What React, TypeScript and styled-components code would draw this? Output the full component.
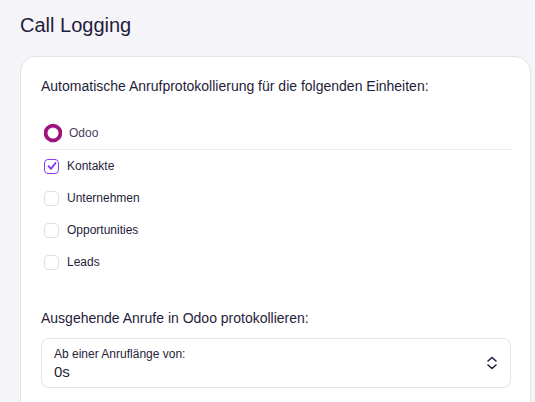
import React from 'react';
import styled, { createGlobalStyle } from 'styled-components';

const GlobalStyle = createGlobalStyle`
  body {
    margin: 0;
    background: #f5f5f9;
    font-family: "Liberation Sans", Arial, sans-serif;
    color: #1f1d3a;
  }
`;

const Page = styled.div`
  padding: 12px 4px 0 20px;
  height: 402px;
  overflow: hidden;
  box-sizing: border-box;
`;

const Title = styled.h1`
  margin: 0;
  font-size: 20px;
  font-weight: 400;
  line-height: 26px;
`;

const Card = styled.div`
  margin-top: 18px;
  background: #ffffff;
  border: 1px solid #e3e3e8;
  border-radius: 16px;
  padding: 19px 19px 20px 20px;
  height: 400px;
`;

const SectionLabel = styled.p<{ $gap: number }>`
  margin: 0 0 ${p => p.$gap}px;
  font-size: 14px;
  line-height: 20px;
`;

const List = styled.div`
  display: flex;
  flex-direction: column;
`;

const Row = styled.label<{ $divider?: boolean }>`
  display: flex;
  align-items: center;
  gap: ${p => (p.$divider ? 7 : 8)}px;
  height: ${p => (p.$divider ? 33 : 32)}px;
  font-size: 12px;
  border-bottom: ${p => (p.$divider ? '1px solid #ebebef' : 'none')};
  padding-left: 3px;
`;

const OdooText = styled.span`
  color: #4a3d63;
  margin-top: 1px;
`;

const Box = styled.span<{ $checked?: boolean }>`
  width: 13px;
  height: 13px;
  border: 1.5px solid ${p => (p.$checked ? '#8b3dff' : '#e2e2e6')};
  border-radius: 4px;
  display: flex;
  align-items: center;
  justify-content: center;
  background: #fff;
`;

const Spacer = styled.div`
  height: 30px;
`;

const Select = styled.div`
  border: 1px solid #e3e3e8;
  border-radius: 8px;
  height: 48px;
  padding: 0 12px;
  display: flex;
  align-items: center;
  justify-content: space-between;
  margin-top: 10px;
`;

const SelectValues = styled.div`
  display: flex;
  flex-direction: column;
  padding-top: 1px;
`;

const SmallLabel = styled.span`
  font-size: 12px;
  line-height: 16px;
`;

const Value = styled.span`
  font-size: 15px;
  line-height: 20px;
`;

const OdooRing = () => (
  <svg width="18" height="20" viewBox="0 0 18 20">
    <circle cx="9" cy="11" r="7.3" fill="none" stroke="#ececf0" strokeWidth="3.6" />
    <circle cx="9" cy="10" r="7.4" fill="none" stroke="#a0127e" strokeWidth="3.7" />
  </svg>
);

const Check = () => (
  <svg width="10" height="10" viewBox="0 0 10 10">
    <path d="M1.5 5.2 L4 7.8 L8.6 2" fill="none" stroke="#7b2ff0" strokeWidth="1.8" strokeLinecap="round" strokeLinejoin="round" />
  </svg>
);

const Chevrons = () => (
  <svg width="12" height="14" viewBox="0 0 12 14">
    <path d="M2 5 L6 1.5 L10 5 M2 9 L6 12.5 L10 9" fill="none" stroke="#1f1d3a" strokeWidth="1.6" strokeLinecap="round" strokeLinejoin="round" />
  </svg>
);

const entities = [
  { name: 'Kontakte', checked: true },
  { name: 'Unternehmen', checked: false },
  { name: 'Opportunities', checked: false },
  { name: 'Leads', checked: false },
];

export default function App() {
  return (
    <>
      <GlobalStyle />
      <Page>
        <Title>Call Logging</Title>
        <Card>
          <SectionLabel $gap={20}>Automatische Anrufprotokollierung für die folgenden Einheiten:</SectionLabel>
          <List>
            <Row $divider>
              <OdooRing />
              <OdooText>Odoo</OdooText>
            </Row>
            {entities.map(e => (
              <Row key={e.name}>
                <Box $checked={e.checked}>{e.checked && <Check />}</Box>
                {e.name}
              </Row>
            ))}
          </List>
          <Spacer />
          <SectionLabel $gap={0}>Ausgehende Anrufe in Odoo protokollieren:</SectionLabel>
          <Select>
            <SelectValues>
              <SmallLabel>Ab einer Anruflänge von:</SmallLabel>
              <Value>0s</Value>
            </SelectValues>
            <Chevrons />
          </Select>
        </Card>
      </Page>
    </>
  );
}
